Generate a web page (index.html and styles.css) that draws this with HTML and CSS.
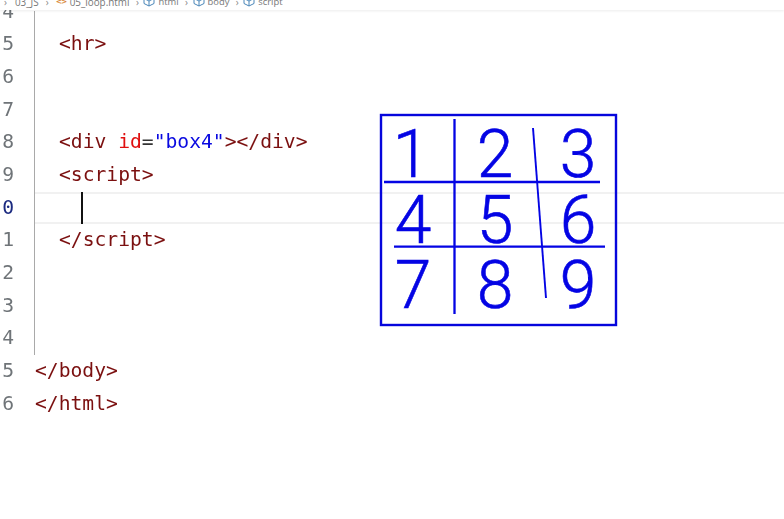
FILE: index.html
```html
<!DOCTYPE html>
<html lang="en">
<head>
<meta charset="utf-8">
<title>05_loop.html</title>
<link rel="stylesheet" href="styles.css">
</head>
<body>
<nav class="crumbs">
  <span class="sep first">›</span><span class="crumb">03_JS</span>
  <span class="sep wide">›</span><span class="file-icon">&lt;&gt;</span><span class="crumb">05_loop.html</span>
  <span class="sep">›</span><svg class="cube" viewBox="0 0 12 12"><path d="M1 3.500 6 1l5 2.500v5L6 11 1 8.500zM1 3.500 6 6l5-2.500M6 6v5"/></svg><span class="crumb symbol">html</span>
  <span class="sep">›</span><svg class="cube" viewBox="0 0 12 12"><path d="M1 3.500 6 1l5 2.500v5L6 11 1 8.500zM1 3.500 6 6l5-2.500M6 6v5"/></svg><span class="crumb symbol">body</span>
  <span class="sep">›</span><svg class="cube" viewBox="0 0 12 12"><path d="M1 3.500 6 1l5 2.500v5L6 11 1 8.500zM1 3.500 6 6l5-2.500M6 6v5"/></svg><span class="crumb symbol">script</span>
</nav>

<main class="editor">
  <div class="gutter">
    <div class="num">4</div><div class="num">5</div><div class="num">6</div><div class="num">7</div>
    <div class="num">8</div><div class="num">9</div><div class="num current">0</div><div class="num">1</div>
    <div class="num">2</div><div class="num">3</div><div class="num">4</div><div class="num">5</div><div class="num">6</div>
  </div>
  <div class="code">
    <div class="guided">
      <div class="line"></div>
      <div class="line level1"><span class="tag">&lt;hr&gt;</span></div>
      <div class="line"></div>
      <div class="line"></div>
      <div class="line level1"><span class="tag">&lt;div </span><span class="attr">id</span><span class="eq">=</span><span class="str">"box4"</span><span class="tag">&gt;&lt;/div&gt;</span></div>
      <div class="line level1"><span class="tag">&lt;script&gt;</span></div>
      <div class="line active"><span class="cursor"></span></div>
      <div class="line level1"><span class="tag">&lt;/script&gt;</span></div>
      <div class="line"></div>
      <div class="line"></div>
      <div class="line"></div>
    </div>
    <div class="line level0"><span class="tag">&lt;/body&gt;</span></div>
    <div class="line level0"><span class="tag">&lt;/html&gt;</span></div>
  </div>
</main>

<svg class="sketch" viewBox="0 0 237 212" role="img" aria-label="Hand-drawn 3 by 3 grid of the numbers 1 to 9">
  <rect class="frame" x="1" y="1" width="235" height="210"/>
  <g class="digits">
    <text x="31" y="63">1</text><text x="115" y="63">2</text><text x="198" y="63">3</text>
    <text x="33" y="129">4</text><text x="115" y="129">5</text><text x="198" y="129">6</text>
    <text x="33" y="194">7</text><text x="115" y="194">8</text><text x="198" y="194">9</text>
  </g>
  <path class="stroke" d="M74.500 5V200M4 68H220M14 132.700H225"/>
  <path class="stroke thin" d="M153 14 166 184"/>
</svg>
</body>
</html>
```
FILE: styles.css
```css
html, body {
  margin: 0;
  padding: 0;
  width: 784px;
  height: 519px;
  overflow: hidden;
  background: #fff;
}

body {
  position: relative;
}

.crumbs {
  position: absolute;
  top: 0;
  left: 0;
  right: 0;
  z-index: 2;
  height: 10px;
  overflow: hidden;
  display: flex;
  align-items: center;
  background: #fff;
  box-shadow: 0 1px 3px rgba(0, 0, 0, .08);
  font: 9.900px/10px "Open Sans", sans-serif;
  color: #777;
}

.crumb {
  margin-top: -7px;
  white-space: nowrap;
}

.crumb.symbol {
  font-size: 9.400px;
}

.sep {
  margin: -7px 4.500px 0 6.500px;
  color: #888;
}

.sep.first {
  margin-left: 4px;
  margin-right: 8px;
}

.sep.wide {
  margin-left: 7px;
  margin-right: 7px;
}

.file-icon {
  width: 14px;
  margin-top: -7px;
  color: #d98a3a;
  font: bold 7.500px/10px "DejaVu Sans", sans-serif;
  letter-spacing: -1px;
}

.cube {
  width: 12px;
  height: 12px;
  margin: -8px 3px 0 0;
  flex: none;
  fill: none;
  stroke: #4a86b8;
  stroke-width: 1;
}

.editor {
  display: flex;
  margin-top: -4.500px;
  font: 19.660px/32.700px "DejaVu Sans Mono", monospace;
  filter: blur(.35px);
}

.gutter {
  flex: none;
  width: 14px;
  margin-right: 20px;
  color: #6f7478;
}

.num {
  height: 32.700px;
  display: flex;
  justify-content: flex-end;
  white-space: nowrap;
}

.num.current {
  color: #1b2a80;
}

.code {
  flex: 1;
  min-width: 0;
}

.guided {
  border-left: 1px solid #a9a9a9;
  margin-top: 15px;
}

.guided .line:first-child {
  height: 17.700px;
}

.line {
  height: 32.700px;
  box-sizing: border-box;
  white-space: pre;
}

.level0 {
  padding-left: 1px;
}

.level1 {
  padding-left: 24px;
}

.active {
  display: flex;
  padding-left: 46px;
  border-top: 2px solid #f1f1f1;
  border-bottom: 2px solid #f1f1f1;
}

.cursor {
  width: 2px;
  margin: -2px 0;
  background: #111;
}

.tag {
  color: #7b1010;
}

.attr {
  color: #e01010;
}

.eq {
  color: #333;
}

.str {
  color: #0a0ae0;
}

.sketch {
  position: absolute;
  left: 380px;
  top: 114px;
  width: 237px;
  height: 212px;
  overflow: visible;
}

.frame {
  fill: none;
  stroke: #0606dc;
  stroke-width: 2.400;
}

.digits text {
  font: 300 66px Roboto, sans-serif;
  fill: #0404e4;
  stroke: #0404e4;
  stroke-width: .6;
  text-anchor: middle;
}

.stroke {
  fill: none;
  stroke: #0404e4;
  stroke-width: 2.300;
}

.stroke.thin {
  stroke-width: 1.900;
}
```
